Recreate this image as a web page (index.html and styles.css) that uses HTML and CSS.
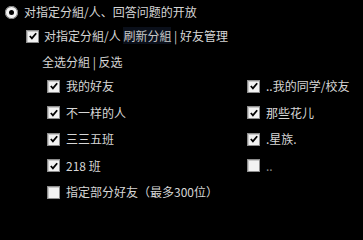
FILE: index.html
```html
<!DOCTYPE html>
<html>
<head>
<meta charset="utf-8">
<link rel="stylesheet" href="styles.css">
</head>
<body>
<div class="page">
  <div class="row row-radio">
    <span class="radio"><span class="dot"></span></span>
    <span class="label">对指定分組/人、回答问题的开放</span>
  </div>
  <div class="row row-sub">
    <span class="cb checked"><svg viewBox="0 0 11 11"><path d="M2 5.5 L4.3 8 L9 2.5" fill="none" stroke="#000" stroke-width="2"/></svg></span>
    <span class="label">对指定分組/人 <span class="refresh">刷新分組</span> | 好友管理</span>
  </div>
  <div class="row row-select">
    <span class="label">全选分組 | 反选</span>
  </div>
  <div class="groups">
    <div class="item"><span class="cb checked"><svg viewBox="0 0 11 11"><path d="M2 5.5 L4.3 8 L9 2.5" fill="none" stroke="#000" stroke-width="2"/></svg></span><span class="label">我的好友</span></div>
    <div class="item"><span class="cb checked"><svg viewBox="0 0 11 11"><path d="M2 5.5 L4.3 8 L9 2.5" fill="none" stroke="#000" stroke-width="2"/></svg></span><span class="label">..我的同学/校友</span></div>
    <div class="item"><span class="cb checked"><svg viewBox="0 0 11 11"><path d="M2 5.5 L4.3 8 L9 2.5" fill="none" stroke="#000" stroke-width="2"/></svg></span><span class="label">不一样的人</span></div>
    <div class="item"><span class="cb checked"><svg viewBox="0 0 11 11"><path d="M2 5.5 L4.3 8 L9 2.5" fill="none" stroke="#000" stroke-width="2"/></svg></span><span class="label">那些花儿</span></div>
    <div class="item"><span class="cb checked"><svg viewBox="0 0 11 11"><path d="M2 5.5 L4.3 8 L9 2.5" fill="none" stroke="#000" stroke-width="2"/></svg></span><span class="label">三三五班</span></div>
    <div class="item"><span class="cb checked"><svg viewBox="0 0 11 11"><path d="M2 5.5 L4.3 8 L9 2.5" fill="none" stroke="#000" stroke-width="2"/></svg></span><span class="label">.星族.</span></div>
    <div class="item"><span class="cb checked"><svg viewBox="0 0 11 11"><path d="M2 5.5 L4.3 8 L9 2.5" fill="none" stroke="#000" stroke-width="2"/></svg></span><span class="label">218 班</span></div>
    <div class="item"><span class="cb"></span><span class="label dim">..</span></div>
    <div class="item wide"><span class="cb"></span><span class="label">指定部分好友（最多300位）</span></div>
  </div>
</div>
</body>
</html>
```
FILE: styles.css
```css
html, body {
  margin: 0;
  padding: 0;
  background: #000;
}
.page {
  width: 363px;
  height: 206px;
  color: #d6d6d6;
  font-family: "Noto Sans CJK SC", "Noto Sans", sans-serif;
  font-size: 12px;
}
.row {
  display: flex;
  align-items: center;
}
.row-radio {
  height: 24px;
  padding-left: 5px;
  gap: 6px;
}
.row-sub {
  height: 24px;
  padding-left: 26px;
  gap: 5px;
}
.row-select {
  height: 22px;
  margin-top: 3px;
  padding-left: 42px;
}
.label {
  line-height: 14px;
  white-space: nowrap;
}
.refresh {
  background: #0a0f1a;
  color: #c8c8c8;
}
.dim {
  color: #888;
}
.radio {
  width: 13px;
  height: 13px;
  border-radius: 50%;
  background: #f4f4f4;
  box-shadow: 0 0 0 1px #777 inset;
  display: flex;
  align-items: center;
  justify-content: center;
}
.dot {
  width: 5px;
  height: 5px;
  border-radius: 50%;
  background: #000;
}
.cb {
  width: 13px;
  height: 13px;
  box-sizing: border-box;
  border: 1px solid #8c8c8c;
  background: #f2f2f2;
  box-shadow: inset 1px 1px 0 #c8c8c8;
  display: flex;
  align-items: center;
  justify-content: center;
  flex: none;
}
.cb svg {
  width: 10px;
  height: 10px;
}
.groups {
  display: grid;
  grid-template-columns: 200px 116px;
  grid-auto-rows: 26.5px;
  padding-left: 47px;
}
.item {
  display: flex;
  align-items: center;
  gap: 6px;
}
.item.wide {
  grid-column: 1 / span 2;
}
```
